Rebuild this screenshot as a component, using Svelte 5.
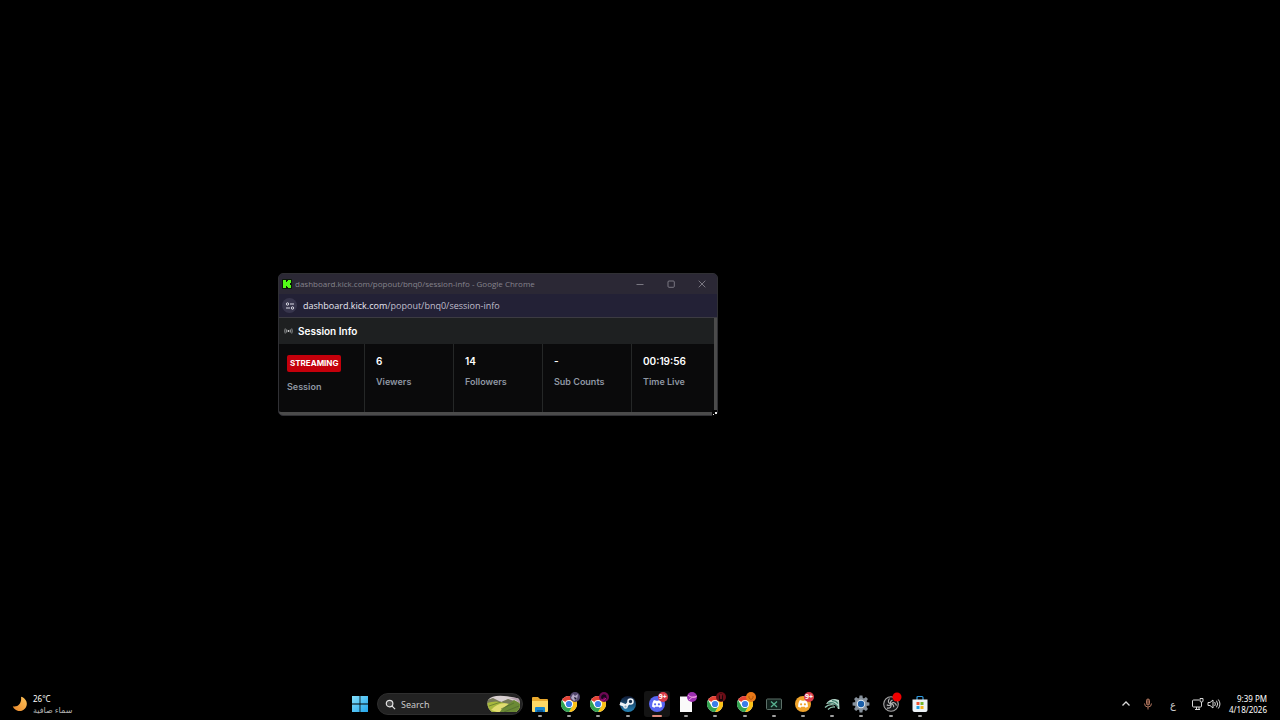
<script>
    const host = 'dashboard.kick.com';
    const path = '/popout/bnq0/session-info';

    const stats = [
        {label: 'Session', value: 'STREAMING', live: true},
        {label: 'Viewers', value: '6'},
        {label: 'Followers', value: '14'},
        {label: 'Sub Counts', value: '-'},
        {label: 'Time Live', value: '00:19:56'},
    ];

    const apps = [
        {name: 'File Explorer', icon: 'folder'},
        {name: 'Chrome profile 1', icon: 'chrome', badge: 'wolf'},
        {name: 'Chrome profile 2', icon: 'chrome', badge: 'pink'},
        {name: 'Steam', icon: 'steam'},
        {name: 'Discord', icon: 'discord', badge: 'count', active: true},
        {name: 'Document', icon: 'page', badge: 'ball'},
        {name: 'Chrome profile 3', icon: 'chrome', badge: 'red'},
        {name: 'Chrome profile 4', icon: 'chrome', badge: 'orange'},
        {name: 'Remote', icon: 'screen'},
        {name: 'Discord Canary', icon: 'canary', badge: 'count'},
        {name: 'Wing', icon: 'wing'},
        {name: 'Settings', icon: 'gear'},
        {name: 'OBS Studio', icon: 'obs', badge: 'rec'},
        {name: 'Microsoft Store', icon: 'store'},
    ];

    const teeth = [0, 45, 90, 135, 180, 225, 270, 315];
</script>

<div class="desktop">
    <section class="window">
        <header class="titlebar">
            <svg class="kick" viewBox="0 0 10 10">
                <rect width="10" height="10" rx="1" fill="#0b1a08"/>
                <path d="M1 1h3v2h1V2h1V1h3v3H8v2h1v3H6V8H5V7H4v2H1z" fill="#53fc18"/>
            </svg>
            <span class="title">{host}{path} - Google Chrome</span>
            <button class="control" aria-label="Minimize">
                <svg viewBox="0 0 8 8"><path d="M.5 4.5h7"/></svg>
            </button>
            <button class="control" aria-label="Maximize">
                <svg viewBox="0 0 8 8"><rect x="1" y="1" width="6.3" height="6.3" rx="1"/></svg>
            </button>
            <button class="control" aria-label="Close">
                <svg viewBox="0 0 8 8"><path d="M.7.7l6.600 6.600M7.300.7L.7 7.300"/></svg>
            </button>
        </header>
        <div class="address">
            <button class="site" aria-label="View site information">
                <svg viewBox="0 0 10 10">
                    <circle cx="2.5" cy="3" r="1.2"/>
                    <path d="M5 3h4M1 7h4"/>
                    <circle cx="7.5" cy="7" r="1.2"/>
                </svg>
            </button>
            <span class="url"><b>{host}</b>{path}</span>
        </div>
        <div class="view">
            <div class="page">
                <h1 class="head">
                    <svg viewBox="0 0 10 8">
                        <circle cx="5" cy="4" r="1.1" fill="#d8dadb" stroke="none"/>
                        <path d="M1.400 1.200Q.2 4 1.400 6.800M3 2.200Q2.200 4 3 5.800M7 2.200Q7.800 4 7 5.800M8.600 1.200Q9.800 4 8.600 6.800"/>
                    </svg>
                    Session Info
                </h1>
                <dl class="stats">
                    {#each stats as stat}
                        <div class="stat">
                            <dd class:live={stat.live}>{stat.value}</dd>
                            <dt>{stat.label}</dt>
                        </div>
                    {/each}
                </dl>
            </div>
        </div>
        <svg class="cursor" viewBox="0 0 6 6">
            <path d="M0 0h5v6H0z" fill="#050505"/>
            <path d="M3 2h2v2H3zM1 4h1v1H1z" fill="#e8e8e8"/>
        </svg>
    </section>

    <footer class="taskbar">
        <button class="weather">
            <svg viewBox="0 0 16 16">
                <defs>
                    <linearGradient id="moon" x1="1" y1="0" x2="0" y2="1">
                        <stop offset="0" stop-color="#ffc45a"/>
                        <stop offset="1" stop-color="#e8862a"/>
                    </linearGradient>
                </defs>
                <path d="M9 .8A7.200 7.200 0 1 1 .8 10.200C6 11.500 10 7 9 .8z" fill="url(#moon)"/>
            </svg>
            <span>
                <span class="temp">26°C</span>
                <span class="sky" lang="ar" dir="rtl">سماء صافية</span>
            </span>
        </button>

        <nav class="center">
            <button class="task" aria-label="Start">
                <svg class="icon" viewBox="0 0 18 18">
                    <defs>
                        <linearGradient id="win" x1="0" y1="0" x2="1" y2="1">
                            <stop offset="0" stop-color="#83dffb"/>
                            <stop offset="1" stop-color="#23a5ea"/>
                        </linearGradient>
                    </defs>
                    <path d="M1 1h7.600v7.600H1zM9.400 1H17v7.600H9.400zM1 9.400h7.600V17H1zM9.400 9.400H17V17H9.400z" fill="url(#win)"/>
                </svg>
            </button>
            <label class="search">
                <svg class="glass" viewBox="0 0 12 12">
                    <circle cx="5" cy="5" r="3.600" fill="#4a4a4a"/>
                    <path d="M7.700 7.700L11 11"/>
                </svg>
                <input type="text" placeholder="Search" aria-label="Search">
                <svg class="scene" viewBox="0 0 34 18">
                    <clipPath id="hill"><path d="M1 5Q5 0 17 1T32 4Q35 13 29 17H5Q-1 12 1 5z"/></clipPath>
                    <g clip-path="url(#hill)">
                        <rect width="34" height="18" fill="#d8cfd0"/>
                        <path d="M0 5l6-2 8 4 7-3 13 4v10H0z" fill="#777a59"/>
                        <path d="M0 8q9-3 17 0t17-2v12H0z" fill="#a8b93d"/>
                        <path d="M4 15q8-9 18-6l-9 9z" fill="#e1dc70"/>
                        <path d="M15 14l12-9 7 4v9H12z" fill="#6b8a35"/>
                        <path d="M2 11l12-4M14 14l13-6M17 17l15-6" stroke="#4c612f" stroke-width=".6" fill="none"/>
                        <path d="M22 3l7 2 5 5V1z" fill="#b49fae"/>
                    </g>
                </svg>
            </label>
            <div class="apps">
                {#each apps as app}
                    <button class="task" class:active={app.active} aria-label={app.name}>
                        <svg class="icon" viewBox="0 0 18 18">
                            {#if app.icon === 'folder'}
                                <path d="M1 3q0-1 1-1h5l2 2h7q1 0 1 1v11H1z" fill="#e9a92e"/>
                                <path d="M1 6h16v10q0 1-1 1H2q-1 0-1-1z" fill="#ffd966"/>
                                <path d="M4 17v-4q0-1 1-1h8q1 0 1 1v4z" fill="#1787cf"/>
                                <path d="M6 15h6v2H6z" fill="#0d5d9d"/>
                            {:else if app.icon === 'chrome'}
                                <circle cx="9" cy="9" r="8" fill="#fff"/>
                                <path d="M9 9L2.070 5A8 8 0 0 1 15.930 5z" fill="#e64235"/>
                                <path d="M9 9V5h6.930A8 8 0 0 1 9 17l3.500-6z" fill="#fbc116"/>
                                <path d="M9 9l3.500 2L9 17A8 8 0 0 1 2.070 5L5.500 11z" fill="#32a350"/>
                                <circle cx="9" cy="9" r="4" fill="#fff"/>
                                <circle cx="9" cy="9" r="3.100" fill="#3b7de8"/>
                            {:else if app.icon === 'steam'}
                                <defs>
                                    <linearGradient id="steam" x1="0" y1="0" x2="0" y2="1">
                                        <stop offset="0" stop-color="#101a35"/>
                                        <stop offset="1" stop-color="#2785b8"/>
                                    </linearGradient>
                                </defs>
                                <circle cx="9" cy="9" r="8" fill="url(#steam)"/>
                                <path d="M1 8.500l6 2.500 3.500-4" stroke="#eef3f7" stroke-width="3" fill="none"/>
                                <circle cx="11.500" cy="6.500" r="2.500" fill="#17304e" stroke="#eef3f7" stroke-width="1.600"/>
                                <circle cx="6.500" cy="11.500" r="1.700" fill="#8fb0c6" stroke="#eef3f7" stroke-width="1.200"/>
                            {:else if app.icon === 'discord' || app.icon === 'canary'}
                                <circle cx="9" cy="9" r="8" fill={app.icon === 'discord' ? '#5865f2' : '#f0a32b'}/>
                                <path d="M5.500 5.500Q7 4.800 7.300 5.200l.4.600h2.600l.4-.6q.3-.4 1.800.3Q14 8 14 11.500q-1 1-2.500 1.300l-.7-1H7.200l-.7 1Q5 12.500 4 11.500 4 8 5.500 5.500z" fill="#fff"/>
                                <circle cx="7.100" cy="9.300" r="1.100" fill={app.icon === 'discord' ? '#5865f2' : '#f0a32b'}/>
                                <circle cx="10.900" cy="9.300" r="1.100" fill={app.icon === 'discord' ? '#5865f2' : '#f0a32b'}/>
                            {:else if app.icon === 'page'}
                                <path d="M3 1.500h8l4 4V17H3z" fill="#fafafa"/>
                            {:else if app.icon === 'screen'}
                                <rect x="1.500" y="4" width="15" height="10.500" rx="1" fill="#11221d" stroke="#5d7069"/>
                                <path d="M6 6.500l6 5.500M12 6.500L6 12" stroke="#59b390" stroke-width="1.300"/>
                            {:else if app.icon === 'wing'}
                                <path d="M3 9Q6 4 12 4l4 1 .5 9h-1.500Q14 10 10 9q-3-1-7 0z" fill="#b7d9cb"/>
                                <path d="M2 12.500q4-4 9-2.500M5 14.500q3-3 7-2.500" stroke="#8fc2ae" fill="none" stroke-width="1.300"/>
                                <path d="M5 8q6-2 10 4M9 5.500q4 0 6 3" stroke="#377a67" fill="none" stroke-width="1.100"/>
                            {:else if app.icon === 'gear'}
                                {#each teeth as angle}
                                    <path d="M7 4l.6-3.400h2.800l.6 3.400z" fill="#87919c" transform="rotate({angle} 9 9)"/>
                                {/each}
                                <circle cx="9" cy="9" r="6.200" fill="#87919c"/>
                                <circle cx="9" cy="9" r="4.200" fill="#e4edf4"/>
                                <circle cx="9" cy="9" r="3.200" fill="#185da8"/>
                            {:else if app.icon === 'obs'}
                                <circle cx="9" cy="9" r="7.300" fill="#151518" stroke="#a5a5a5" stroke-width="1.100"/>
                                {#each [0, 120, 240] as angle}
                                    <path d="M9 9Q4.500 7.500 7.500 3.500M9 9Q7.500 6.500 10.500 5" fill="none" stroke="#b4b4b4" stroke-width="1.200" transform="rotate({angle} 9 9)"/>
                                {/each}
                            {:else if app.icon === 'store'}
                                <path d="M6 5V2.500Q6 1.500 7 1.500h4q1 0 1 1V5" fill="none" stroke="#2f9be0" stroke-width="1.200"/>
                                <path d="M1.500 4.500h15V15q0 2-2 2h-11q-2 0-2-2z" fill="#edf3f7"/>
                                <path d="M5.500 7h3v3h-3z" fill="#ef5332"/>
                                <path d="M9.500 7h3v3h-3z" fill="#76b72a"/>
                                <path d="M5.500 11h3v3h-3z" fill="#1f9de0"/>
                                <path d="M9.500 11h3v3h-3z" fill="#f7b51b"/>
                            {/if}
                        </svg>
                        {#if app.badge === 'count'}
                            <span class="badge count">9+</span>
                        {:else if app.badge}
                            <svg class="badge" viewBox="0 0 10 10">
                                {#if app.badge === 'wolf'}
                                    <circle cx="5" cy="5" r="5" fill="#52466c"/>
                                    <path d="M1 6l2-4 2 2 3-2-1 5-3 2z" fill="#b4a9c7"/>
                                    <path d="M4 5l3 1-2 2z" fill="#201b30"/>
                                {:else if app.badge === 'pink'}
                                    <circle cx="5" cy="5" r="5" fill="#6d0853"/>
                                    <path d="M2 5q1-4 5-2l1 4-3-2-2 3z" fill="#15061a"/>
                                    <path d="M2 8q3 1 5-2" stroke="#b9128c" fill="none"/>
                                {:else if app.badge === 'ball'}
                                    <circle cx="5" cy="5" r="5" fill="#9c2fb0"/>
                                    <path d="M1 3q4 4 9 1M2 8q3-4 7-3" stroke="#ef9be0" fill="none"/>
                                {:else if app.badge === 'red'}
                                    <circle cx="5" cy="5" r="5" fill="#6a0d16"/>
                                    <path d="M3 9V4l2-3 2 3v5z" fill="#18070a"/>
                                    <path d="M5 2v5" stroke="#c22432"/>
                                {:else if app.badge === 'orange'}
                                    <circle cx="5" cy="5" r="5" fill="#e87818"/>
                                    <path d="M3 4v2q2 3 4 0V4" stroke="#b3590f" fill="none"/>
                                {:else}
                                    <circle cx="5" cy="5" r="4.500" fill="#f00000"/>
                                {/if}
                            </svg>
                        {/if}
                        <i class="mark"></i>
                    </button>
                {/each}
            </div>
        </nav>

        <div class="tray">
            <button class="tool" aria-label="Show hidden icons">
                <svg viewBox="0 0 14 14"><path d="M3.500 8.500L7 5l3.500 3.500" stroke-width="1.300"/></svg>
            </button>
            <button class="tool mic" aria-label="Microphone">
                <svg viewBox="0 0 14 14">
                    <rect x="5.500" y="2" width="3" height="6" rx="1.500" fill="#6c4334"/>
                    <path d="M3.500 6.500Q3.500 10 7 10t3.500-3.500M7 10v2.500"/>
                </svg>
            </button>
            <button class="lang" lang="ar">ع</button>
            <button class="status" aria-label="Network and volume">
                <svg viewBox="0 0 14 14">
                    <path d="M8 3H2.500Q1.500 3 1.500 4v5q0 1 1 1h7q1 0 1-1V7M4 12.500h5M5.500 10v2.500M8 10v2.500M10.500 7V5M9 1.500h3V4q0 1-1.500 1T9 4z"/>
                </svg>
                <svg viewBox="0 0 14 14">
                    <path d="M1 5.500h2L6 3v8L3 8.500H1zM7.700 5q1.300 2 0 4M9.500 3.700q2.300 3.300 0 6.600M11.300 2.500q3.300 4.500 0 9"/>
                </svg>
            </button>
            <button class="clock">
                <time>9:39 PM</time>
                <time>4/18/2026</time>
            </button>
        </div>
    </footer>
</div>

<style>
    :global(body) {
        background: #000;
    }
    .desktop {
        min-height: 100vh;
        display: flex;
        flex-direction: column;
        justify-content: flex-end;
        font-family: "Noto Sans", "DejaVu Sans", sans-serif;
        color: #fff;
    }
    button {
        display: flex;
        align-items: center;
        justify-content: center;
        padding: 0;
        border: 0;
        background: none;
        color: inherit;
        font: inherit;
    }
    .window {
        position: absolute;
        left: 278px;
        top: 273px;
        width: 440px;
        box-sizing: border-box;
        border: 1px solid #303034;
        border-radius: 5px;
        background: #232136;
        font-family: "Open Sans", sans-serif;
    }
    .titlebar {
        height: 20px;
        display: flex;
        align-items: center;
        padding-left: 3px;
        background: #2b2835;
        border-radius: 4px 4px 0 0;
    }
    .kick {
        width: 10px;
        height: 10px;
        margin-right: 3px;
    }
    .title {
        flex: 1;
        font-size: 8px;
        line-height: 10px;
        color: #85838c;
        white-space: nowrap;
    }
    .control {
        width: 31px;
        height: 20px;
    }
    .control svg {
        width: 8px;
        height: 8px;
        fill: none;
        stroke: #8e8c96;
        stroke-width: 0.8;
    }
    .address {
        height: 23px;
        display: flex;
        align-items: center;
        gap: 6px;
        padding-left: 3px;
        border-bottom: 1px solid #3c3b42;
    }
    .site {
        width: 15px;
        height: 15px;
        border-radius: 50%;
        background: #37354c;
    }
    .site svg {
        width: 10px;
        height: 10px;
        fill: none;
        stroke: #dcdbe6;
    }
    .url {
        font-size: 9px;
        color: #c0bfcd;
    }
    .url b {
        font-weight: 400;
        color: #e9e8f2;
    }
    .view {
        border-right: 3px solid #4b4b4b;
        border-bottom: 3px solid #4b4b4b;
        border-radius: 0 0 4px 4px;
        background: #0a0a0b;
        font-family: Inter, sans-serif;
    }
    .head {
        height: 26px;
        margin: 0;
        padding-left: 5px;
        display: flex;
        align-items: center;
        gap: 5px;
        background: #1e2021;
        font-size: 10px;
        line-height: 12px;
        font-weight: 600;
    }
    .head svg {
        width: 9px;
        height: 8px;
        fill: none;
        stroke: #b9bcbe;
        stroke-width: 0.8;
    }
    .stats {
        height: 68px;
        margin: 0;
        display: flex;
    }
    .stat {
        width: 77px;
        padding: 11px 0 0 11px;
        display: flex;
        flex-direction: column;
        align-items: flex-start;
        gap: 9px;
        border-left: 1px solid #252727;
        font-size: 10px;
        line-height: 12px;
        white-space: nowrap;
    }
    .stat:first-child {
        padding-left: 8px;
        border-left: 0;
    }
    .stat:last-child {
        flex: 1;
    }
    dd {
        margin: 0;
        font-weight: 600;
    }
    dt {
        font-size: 9px;
        font-weight: 600;
        color: #8f97a3;
    }
    .live {
        padding: 0 3px;
        border-radius: 2px;
        background: #c4000b;
        font-size: 8px;
        font-weight: 700;
        line-height: 17px;
    }
    .cursor {
        position: absolute;
        right: -1px;
        bottom: -1px;
        width: 6px;
        height: 6px;
    }
    .taskbar {
        height: 32px;
        display: grid;
        grid-template-columns: 1fr auto 1fr;
        align-items: center;
        font-size: 8px;
        line-height: 11px;
    }
    .weather {
        justify-self: start;
        gap: 5px;
        padding-left: 12px;
        text-align: left;
    }
    .weather svg {
        width: 16px;
        height: 16px;
    }
    .weather > span {
        display: grid;
    }
    .sky {
        color: #b4b4b4;
    }
    .center {
        display: flex;
        align-items: center;
        gap: 4px;
    }
    .task {
        position: relative;
        width: 26px;
        height: 26px;
        border-radius: 3px;
    }
    .task.active {
        background: #141414;
    }
    .icon {
        width: 18px;
        height: 18px;
    }
    .search {
        width: 146px;
        height: 22px;
        box-sizing: border-box;
        display: flex;
        align-items: center;
        gap: 5px;
        padding: 0 1px 0 7px;
        border: 1px solid #2e2e2e;
        border-radius: 11px;
        background: #222;
    }
    .glass {
        width: 11px;
        height: 11px;
        flex: none;
        fill: none;
        stroke: #e4e4e4;
        stroke-width: 1.3;
    }
    .search input {
        flex: 1;
        min-width: 0;
        padding: 0;
        border: 0;
        background: none;
        color: #fff;
        font: 9px "Noto Sans", sans-serif;
    }
    .search input::placeholder {
        color: #c9c9c9;
    }
    .scene {
        width: 34px;
        height: 18px;
        flex: none;
    }
    .apps {
        width: 406px;
        display: flex;
        justify-content: space-between;
    }
    .badge {
        position: absolute;
        top: 1px;
        right: 2px;
        width: 10px;
        height: 10px;
    }
    .count {
        border-radius: 5px;
        background: #d83c4a;
        font-size: 7px;
        font-weight: 700;
        line-height: 10px;
        text-align: center;
    }
    .mark {
        position: absolute;
        bottom: 0;
        left: 11px;
        width: 4px;
        height: 2px;
        border-radius: 1px;
        background: #a0a0a0;
    }
    .active .mark {
        left: 8px;
        width: 10px;
        background: #e08a7c;
    }
    .tray {
        justify-self: end;
        display: flex;
        align-items: center;
        gap: 8px;
        padding-right: 13px;
    }
    .tray svg {
        width: 14px;
        height: 14px;
        fill: none;
        stroke: #d8d8d8;
    }
    .tray .mic svg {
        stroke: #b0765f;
    }
    .lang {
        width: 20px;
        font-size: 10px;
        color: #d0d0d0;
    }
    .status {
        gap: 2px;
    }
    .clock {
        flex-direction: column;
        align-items: flex-end;
    }
</style>
